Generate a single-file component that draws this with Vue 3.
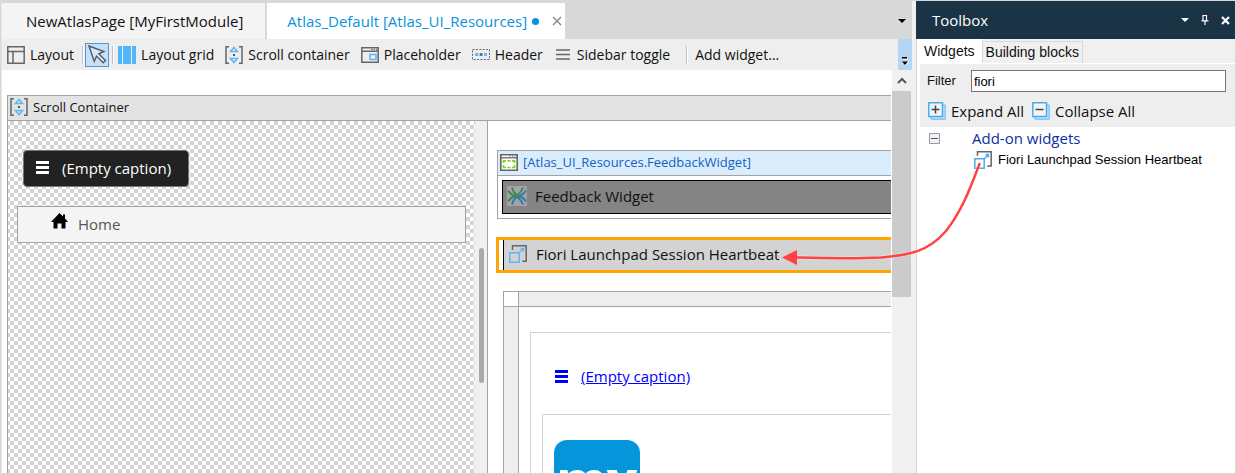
<script setup>
import { ref } from 'vue'

const filter = ref('fiori')
</script>

<template>
  <div class="app">
    <main class="editor">
      <div class="tabs">
        <button type="button" class="tab">NewAtlasPage [MyFirstModule]</button>
        <div class="tab active">
          <button type="button" class="tab-label">Atlas_Default [Atlas_UI_Resources]<i class="dot"></i></button>
          <button type="button" class="close" aria-label="Close tab">
            <svg width="10" height="10" viewBox="0 0 10 10"><path d="M1 1l8 8M9 1l-8 8" stroke="#888" stroke-width="1.4" /></svg>
          </button>
        </div>
        <button type="button" class="tab-menu" aria-label="Open tabs">
          <svg width="8" height="4" viewBox="0 0 8 4"><path d="M0 0h8L4 4z" fill="#000" /></svg>
        </button>
      </div>

      <div class="toolbar">
        <button type="button" class="tool">
          <svg width="18" height="18" viewBox="0 0 18 18" fill="none" stroke="#666" stroke-width="1.5"><path d="M.8.8h16.4v16.4H.8zM.8 5.5h16.4M6 5.5v11.7" /></svg>
          <span>Layout</span>
        </button>
        <i class="sep s1"></i>
        <button type="button" class="pointer" aria-label="Select">
          <svg width="19" height="19" viewBox="0 0 19 19" fill="#d6e8fb" stroke="#555b63" stroke-width="1.4"><path d="M1 1l15 5.5-5.2 2.3 6.7 6.7-2.3 2.3-6.7-6.7-2.3 5.2z" /></svg>
        </button>
        <i class="sep s2"></i>
        <button type="button" class="tool">
          <svg width="18" height="18" viewBox="0 0 18 18" fill="#50b5fa"><path d="M0 0h4v18H0zM5 0h8v18H5zM14 0h4v18h-4z" /></svg>
          <span>Layout grid</span>
        </button>
        <button type="button" class="tool">
          <svg width="18" height="18" viewBox="0 0 18 18" fill="none"><path d="M4 .8H1v16.4h3M14 .8h3v16.4h-3" stroke="#666" stroke-width="1.5" /><path d="M5.5 5.5h7L9 1.5zM5.5 12.5h7L9 16.5z" stroke="#5bb8f5" stroke-width="1.5" /><path d="M8 8h2v2H8z" fill="#555" /></svg>
          <span>Scroll container</span>
        </button>
        <button type="button" class="tool">
          <svg width="18" height="16" viewBox="0 0 18 16" fill="none"><path d="M.8.8h16.4v14.4H.8zM.8 4.2h16.4" stroke="#666" stroke-width="1.5" /><path d="M10 2.5h1.5m1 0H14m1 0h1" stroke="#666" /><path d="M9 7.5h6v5H9z" stroke="#5bb8f5" stroke-width="1.6" /></svg>
          <span>Placeholder</span>
        </button>
        <button type="button" class="tool">
          <svg width="18" height="11" viewBox="0 0 18 11" fill="none"><path d="M.5.5h17v10H.5z" stroke="#666" stroke-dasharray="2 1.4" /><path d="M3 5.5h12" stroke="#65bdf8" stroke-width="3" stroke-dasharray="3.5 1" /><path d="M8 5.5h2" stroke="#555" stroke-width="2" /></svg>
          <span>Header</span>
        </button>
        <button type="button" class="tool wide">
          <svg width="14" height="11" viewBox="0 0 14 11" stroke="#666" stroke-width="1.5"><path d="M0 1h14M0 5.5h14M0 10h14" /></svg>
          <span>Sidebar toggle</span>
        </button>
        <i class="sep s3"></i>
        <button type="button" class="tool">Add widget...</button>
        <button type="button" class="overflow" aria-label="More tools">
          <svg width="8" height="9" viewBox="0 0 8 9"><path d="M2 2h5M2 5h6L5 8z" stroke="#fff" fill="#fff" /><path d="M1 0h5v1.500H1zM1 4.500h6L4 8z" fill="#000" /></svg>
        </button>
      </div>

      <div class="canvas">
        <div class="page">
          <section class="container">
            <header class="container-head">
              <svg width="18" height="18" viewBox="0 0 18 18" fill="none"><path d="M4 .8H1v16.4h3M14 .8h3v16.4h-3" stroke="#666" stroke-width="1.5" /><path d="M5.500 5.500h7L9 1.500zM5.500 12.500h7L9 16.500z" stroke="#5bb8f5" stroke-width="1.5" /><path d="M8 8h2v2H8z" fill="#555" /></svg>
              <span>Scroll Container</span>
            </header>
            <div class="columns">
              <div class="side">
                <div class="checker">
                  <button type="button" class="dark">
                    <svg width="13" height="13" viewBox="0 0 13 13"><path d="M0 0h13v3H0zM0 5h13v3H0zM0 10h13v3H0z" fill="#fff" /></svg>
                    <span>(Empty caption)</span>
                  </button>
                  <div class="home">
                    <svg width="17" height="16" viewBox="0 0 17 16"><path d="M8.500 0l3.500 3.500V1.500h2v4L17 9h-2.500v6.500H10.500v-5h-4v5H2.500V9H0z" fill="#000" /></svg>
                    <span>Home</span>
                  </div>
                </div>
                <div class="side-scroll"><i></i></div>
              </div>

              <div class="content">
                <div class="snippet">
                  <div class="snippet-head">
                    <svg width="18" height="17" viewBox="0 0 18 17" fill="none"><path d="M.8.8h16.400v15.400H.8z" fill="#fff" stroke="#666" stroke-width="1.600" /><path d="M1 3.800h16" stroke="#666" stroke-width="1.300" /><path d="M9.500 2.200h1m1.500 0h1m1.500 0h1" stroke="#666" /><path d="M6 6.800H3.500V9M3.500 11v2.500H6M12 6.800h2.500V9M14.500 11v2.500H12M7.500 6.800h3M7.500 13.500h3" stroke="#7ed321" stroke-width="1.700" /></svg>
                    <span>[Atlas_UI_Resources.FeedbackWidget]</span>
                  </div>
                  <div class="feedback">
                    <svg width="20" height="20" viewBox="0 0 20 20" fill="none"><path d="M0 0h20v20H0z" fill="#a3a3a3" /><path d="M5 1.500Q6.500 7 10 9Q13.500 7 16 1.500M1 4.500Q4.500 9.500 9 10Q4.500 10.500 1 15.500" stroke="#39864b" stroke-width="1.800" /><path d="M19 4.500Q15.500 9.500 11 10Q15.500 10.500 19 15.500M5 18.500Q6.500 13 10 11Q13.500 13 16 18.500" stroke="#267ba7" stroke-width="1.800" /></svg>
                    <span>Feedback Widget</span>
                  </div>
                </div>

                <div class="selected">
                  <div class="selected-in">
                    <svg width="18" height="18" viewBox="0 0 18 18" fill="none"><path d="M3.500 5V.8h13.700v15.400h-4" stroke="#666" stroke-width="1.500" /><path d="M.8 7.800h9.400v9.400H.8z" stroke="#5bb8f5" stroke-width="1.500" /><path d="M10.500 7.500l4-4M11.500 3.500h3v3" stroke="#5bb8f5" stroke-width="1.300" /></svg>
                    <span>Fiori Launchpad Session Heartbeat</span>
                  </div>
                </div>

                <div class="layout-grid">
                  <div class="corner"></div>
                  <div class="ruler-x"></div>
                  <div class="ruler-y"></div>
                  <div class="cell">
                    <div class="frame">
                      <a href="#" class="menu-link">
                        <svg width="13" height="13" viewBox="0 0 13 13"><path d="M0 0h13v3H0zM0 5h13v3H0zM0 10h13v3H0z" fill="#00f" /></svg>
                        <span>(Empty caption)</span>
                      </a>
                      <div class="inner-frame">
                        <div class="logo">my</div>
                      </div>
                    </div>
                  </div>
                </div>
              </div>
            </div>
          </section>
        </div>
        <div class="scrollbar">
          <svg width="10" height="7" viewBox="0 0 10 7"><path d="M1 6l4-4 4 4" fill="none" stroke="#555" stroke-width="2" /></svg>
          <i></i>
        </div>
      </div>
    </main>

    <aside class="toolbox">
      <header class="toolbox-head">
        <h2>Toolbox</h2>
        <button type="button" aria-label="Window options"><svg width="8" height="4" viewBox="0 0 8 4"><path d="M0 0h8L4 4z" fill="#fff" /></svg></button>
        <button type="button" aria-label="Pin"><svg width="8" height="10" viewBox="0 0 8 10"><path d="M2 5.500V.5h3.500v5M5.500.5v5M.5 5.800h7M4 6v4" fill="none" stroke="#fff" stroke-width="1.200" /></svg></button>
        <button type="button" aria-label="Close"><svg width="9" height="9" viewBox="0 0 9 9"><path d="M1 1l7 7M8 1L1 8" stroke="#fff" stroke-width="2.200" /></svg></button>
      </header>
      <div class="box-tabs">
        <button type="button" class="box-tab on">Widgets</button>
        <button type="button" class="box-tab">Building blocks</button>
      </div>
      <div class="box-body">
        <div class="filter-panel">
          <div class="filter-row">
            <label for="filter">Filter</label>
            <input id="filter" v-model="filter" type="text" />
          </div>
          <div class="actions">
            <button type="button">
              <svg width="18" height="18" viewBox="0 0 18 18" fill="none"><path d="M3 3h14.200v14.200H3z" fill="#bfe2fb" stroke="#62baf5" /><path d="M.8.8h13.700v13.700H.8z" fill="#f3f3f3" stroke="#48adf0" stroke-width="1.500" /><path d="M3.500 7.500h8M7.500 3.500v8" stroke="#444" stroke-width="1.500" /></svg>
              <span>Expand All</span>
            </button>
            <button type="button">
              <svg width="18" height="18" viewBox="0 0 18 18" fill="none"><path d="M3 3h14.200v14.200H3z" fill="#bfe2fb" stroke="#62baf5" /><path d="M.8.8h13.700v13.700H.8z" fill="#f3f3f3" stroke="#48adf0" stroke-width="1.500" /><path d="M3.500 7.500h8" stroke="#444" stroke-width="1.500" /></svg>
              <span>Collapse All</span>
            </button>
          </div>
        </div>
        <div class="group">
          <svg width="11" height="11" viewBox="0 0 11 11"><path d="M.5.5h10v10H.5z" fill="#f2f2f2" stroke="#999" /><path d="M2 5.500h7" stroke="#3953a4" /></svg>
          <span>Add-on widgets</span>
        </div>
        <div class="item">
          <svg width="18" height="18" viewBox="0 0 18 18" fill="none"><path d="M3.500 5V.8h13.700v14.200h-4" stroke="#666" stroke-width="1.500" /><path d="M.8 7.800h9.400v9.400H.8z" stroke="#48adf0" stroke-width="1.500" /><path d="M10.500 7.500l4-4M11.500 3.500h3v3" stroke="#48adf0" stroke-width="1.300" /></svg>
          <span>Fiori Launchpad Session Heartbeat</span>
        </div>
      </div>
    </aside>

    <svg class="arrow" width="200" height="110" viewBox="0 0 200 110" aria-hidden="true">
      <path d="M197.500 8C192 21 183 51 164 75C146 96 127 99 99 101.500C69 103 34 102 14 101.500" fill="none" stroke="#fff" stroke-opacity=".35" stroke-width="4" />
      <path d="M197.500 8C192 21 183 51 164 75C146 96 127 99 99 101.500C69 103 34 102 14 101.500" fill="none" stroke="#ff4343" stroke-width="2.500" stroke-linecap="round" />
      <path d="M0 101.500l15-7.500v15z" fill="#ff4343" />
    </svg>
  </div>
</template>

<style>
body {
  margin: 0;
}
</style>

<style scoped>
* {
  box-sizing: border-box;
}

svg {
  display: block;
  flex: none;
}

button {
  margin: 0;
  padding: 0;
  border: 0;
  background: none;
  color: inherit;
  font: inherit;
  white-space: nowrap;
}

.app {
  position: relative;
  display: flex;
  height: 100vh;
  overflow: hidden;
  border: 1px solid #d8d8d8;
  background: #f0f0f0;
  color: #111;
  font: 15px/20px "Open Sans", "Noto Sans", sans-serif;
  white-space: nowrap;
}

.editor {
  display: flex;
  flex: 1;
  flex-direction: column;
  min-width: 0;
  margin-right: 4px;
  border-left: 1px solid #e6e6e6;
}

.tabs {
  display: flex;
  flex: none;
  gap: 2px;
  height: 38px;
  padding-top: 2px;
  background: #d8d8d8;
}

.tab {
  display: flex;
  align-items: center;
  padding: 0 22px 0 24px;
  background: #f4f4f4;
}

.tab.active {
  gap: 13px;
  padding: 0 3px 0 20px;
  background: #fff;
  color: #0a93dc;
}

.tab-label {
  display: flex;
  align-items: center;
  gap: 5px;
}

.dot {
  width: 7px;
  height: 7px;
  border-radius: 50%;
  background: #0595db;
}

.tab-menu {
  margin-left: auto;
  padding: 0 6px;
}

.toolbar {
  display: flex;
  flex: none;
  align-items: center;
  height: 31px;
  padding-left: 5px;
  background: #eee;
  font-size: 14px;
}

.tool {
  display: flex;
  align-items: center;
  gap: 5px;
  margin-right: 11px;
}

.tool.wide {
  gap: 7px;
  margin-left: 2px;
  margin-right: 16px;
}

.sep {
  width: 2px;
  height: 18px;
  border-left: 1px solid #c2c2c2;
  background: #fff;
}

.s1 {
  margin: 0 1px 0 -3px;
}

.s2 {
  margin: 0 4px 0 3px;
}

.s3 {
  margin-right: 7px;
}

.pointer {
  display: grid;
  place-items: center;
  width: 24px;
  height: 24px;
  border: 1px solid #5b92d2;
  background: #c5e0fb;
}

.overflow {
  display: flex;
  align-items: flex-end;
  justify-content: center;
  align-self: stretch;
  width: 14px;
  margin-left: auto;
  padding-bottom: 4px;
  background: #b5d6f3;
}

.canvas {
  display: flex;
  flex: 1;
  min-height: 0;
}

.page {
  display: flex;
  flex: 1;
  min-width: 0;
  padding: 25px 1px 0 5px;
  overflow: hidden;
  background: #fff;
}

.container {
  display: flex;
  flex: 1;
  flex-direction: column;
  min-width: 0;
  border: 1px solid #a3a3a3;
  border-width: 1px 0 0 1px;
}

.container-head {
  display: flex;
  flex: none;
  align-items: center;
  gap: 5px;
  height: 24px;
  padding: 0 0 2px 2px;
  background: #e3e3e3;
  font-size: 13px;
}

.columns {
  display: flex;
  flex: 1;
  min-height: 0;
  border-top: 1px solid #a3a3a3;
}

.side {
  display: flex;
  flex: none;
  width: 480px;
  border-right: 1px solid #a3a3a3;
}

.checker {
  flex: 1;
  padding: 29px 9px 0;
  background: #fff repeating-conic-gradient(#d3d3d3 0 25%, #fff 0 50%) 6px 0 / 8px 8px;
}

.dark {
  display: flex;
  align-items: center;
  gap: 13px;
  height: 37px;
  margin-left: 6px;
  padding: 0 17px 2px 12px;
  border: 1px solid #777;
  border-radius: 4px;
  background: #222;
  color: #fff;
}

.home {
  display: flex;
  align-items: center;
  gap: 10px;
  height: 37px;
  margin-top: 19px;
  padding: 0 0 2px 33px;
  border: 1px solid #a3a3a3;
  background: #f4f4f4;
  color: #555;
}

.home svg {
  margin-bottom: 6px;
}

.side-scroll {
  width: 12px;
  padding: 127px 3px 0 4px;
  background: #f0f0f0;
}

.side-scroll i {
  display: block;
  height: 135px;
  border-radius: 3px;
  background: #a9a9a9;
}

.content {
  display: flex;
  flex: 1;
  flex-direction: column;
  min-width: 0;
  padding: 29px 0 0 8px;
}

.snippet {
  flex: none;
  height: 69px;
  margin-left: 1px;
  border: 1px solid #a3a3a3;
  border-right: 0;
}

.snippet-head {
  display: flex;
  align-items: center;
  gap: 5px;
  height: 25px;
  padding: 0 0 2px 2px;
  border-bottom: 1px solid #a3a3a3;
  background: #d9edfc;
  color: #1660c0;
  font-size: 13px;
}

.feedback {
  display: flex;
  align-items: center;
  gap: 8px;
  height: 34px;
  margin: 4px 0 0 4px;
  padding: 0 0 2px 4px;
  border: 1px solid #000;
  border-right: 0;
  background: #848484;
}

.selected {
  flex: none;
  height: 36px;
  margin-top: 18px;
  padding-left: 4px;
  border: 3px solid #ffa500;
  border-right: 0;
}

.selected-in {
  display: flex;
  align-items: center;
  gap: 9px;
  height: 30px;
  padding: 0 0 2px 5px;
  border-left: 1px solid #000;
  background: #d3d3d3;
}

.layout-grid {
  display: grid;
  flex: 1;
  grid-template: 15px 1fr / 15px 1fr;
  min-height: 0;
  margin: 18px 0 0 7px;
  border: 1px solid #a3a3a3;
  border-width: 1px 0 0 1px;
}

.corner {
  border: 1px solid #a3a3a3;
  border-width: 0 1px 1px 0;
}

.ruler-x {
  border-bottom: 1px solid #a3a3a3;
  background: #eee;
}

.ruler-y {
  border-right: 1px solid #a3a3a3;
  background: #eee;
}

.cell {
  display: flex;
  min-height: 0;
  padding: 25px 0 0 11px;
}

.frame {
  display: flex;
  flex: 1;
  flex-direction: column;
  padding: 33px 0 0 11px;
  border: 1px solid #d3d3d3;
  border-width: 1px 0 0 1px;
}

.menu-link {
  display: flex;
  align-items: center;
  gap: 13px;
  margin-left: 13px;
  color: #00f;
  text-decoration: none;
}

.menu-link span {
  text-decoration: underline;
}

.inner-frame {
  flex: 1;
  margin-top: 28px;
  padding: 25px 0 0 11px;
  border: 1px solid #d3d3d3;
  border-width: 1px 0 0 1px;
}

.logo {
  width: 86px;
  height: 86px;
  border-radius: 13px;
  background: #0595db;
  color: #fff;
  font-size: 50px;
  font-weight: 800;
  line-height: 78px;
  text-align: center;
}

.scrollbar {
  flex: none;
  width: 20px;
  padding-right: 1px;
  background: #f0f0f0;
}

.scrollbar svg {
  margin: 7px auto;
}

.scrollbar i {
  display: block;
  height: 206px;
  background: #cbcbcb;
}

.toolbox {
  display: flex;
  flex: none;
  flex-direction: column;
  width: 319px;
}

.toolbox-head {
  display: flex;
  flex: none;
  align-items: center;
  gap: 12px;
  height: 38px;
  padding: 0 5px 0 16px;
  background: #1a3345;
  color: #fff;
}

.toolbox-head h2 {
  flex: 1;
  margin: 0;
  font: inherit;
}

.box-tabs {
  display: flex;
  flex: none;
  align-items: flex-end;
  height: 24px;
  border-left: 1px solid #d8d8d8;
  font: 14px/20px "Liberation Sans", Arial, sans-serif;
}

.box-tab {
  height: 22px;
  padding: 0 3px 1px;
  border: 1px solid #d8d8d8;
  border-bottom: 0;
}

.box-tab.on {
  height: 24px;
  padding: 0 7px 1px;
  border: 0;
  background: #fff;
}

.box-body {
  flex: 1;
  padding: 1px 0 0 3px;
  border-left: 1px solid #d8d8d8;
  background: #fff;
}

.filter-panel {
  height: 63px;
  background: #eee;
}

.filter-row {
  display: flex;
  align-items: center;
  gap: 15px;
  height: 34px;
  padding: 0 9px 0 7px;
  font: 13px/20px "Liberation Sans", Arial, sans-serif;
}

.filter-row input {
  flex: 1;
  min-width: 0;
  height: 22px;
  padding: 0 2px;
  border: 1px solid #777;
  border-radius: 0;
  outline: 0;
  background: #fff;
  color: #000;
  font: inherit;
}

.actions {
  display: flex;
  gap: 8px;
  padding: 3px 8px 0;
}

.actions button {
  display: flex;
  align-items: center;
  gap: 5px;
}

.group {
  display: flex;
  align-items: center;
  gap: 32px;
  height: 22px;
  padding-left: 9px;
  color: #0a31a5;
}

.item {
  display: flex;
  align-items: center;
  gap: 6px;
  height: 22px;
  padding-left: 54px;
  color: #000;
  font: 13px/20px "Liberation Sans", Arial, sans-serif;
}

.arrow {
  position: absolute;
  top: 155px;
  right: 253px;
}
</style>
